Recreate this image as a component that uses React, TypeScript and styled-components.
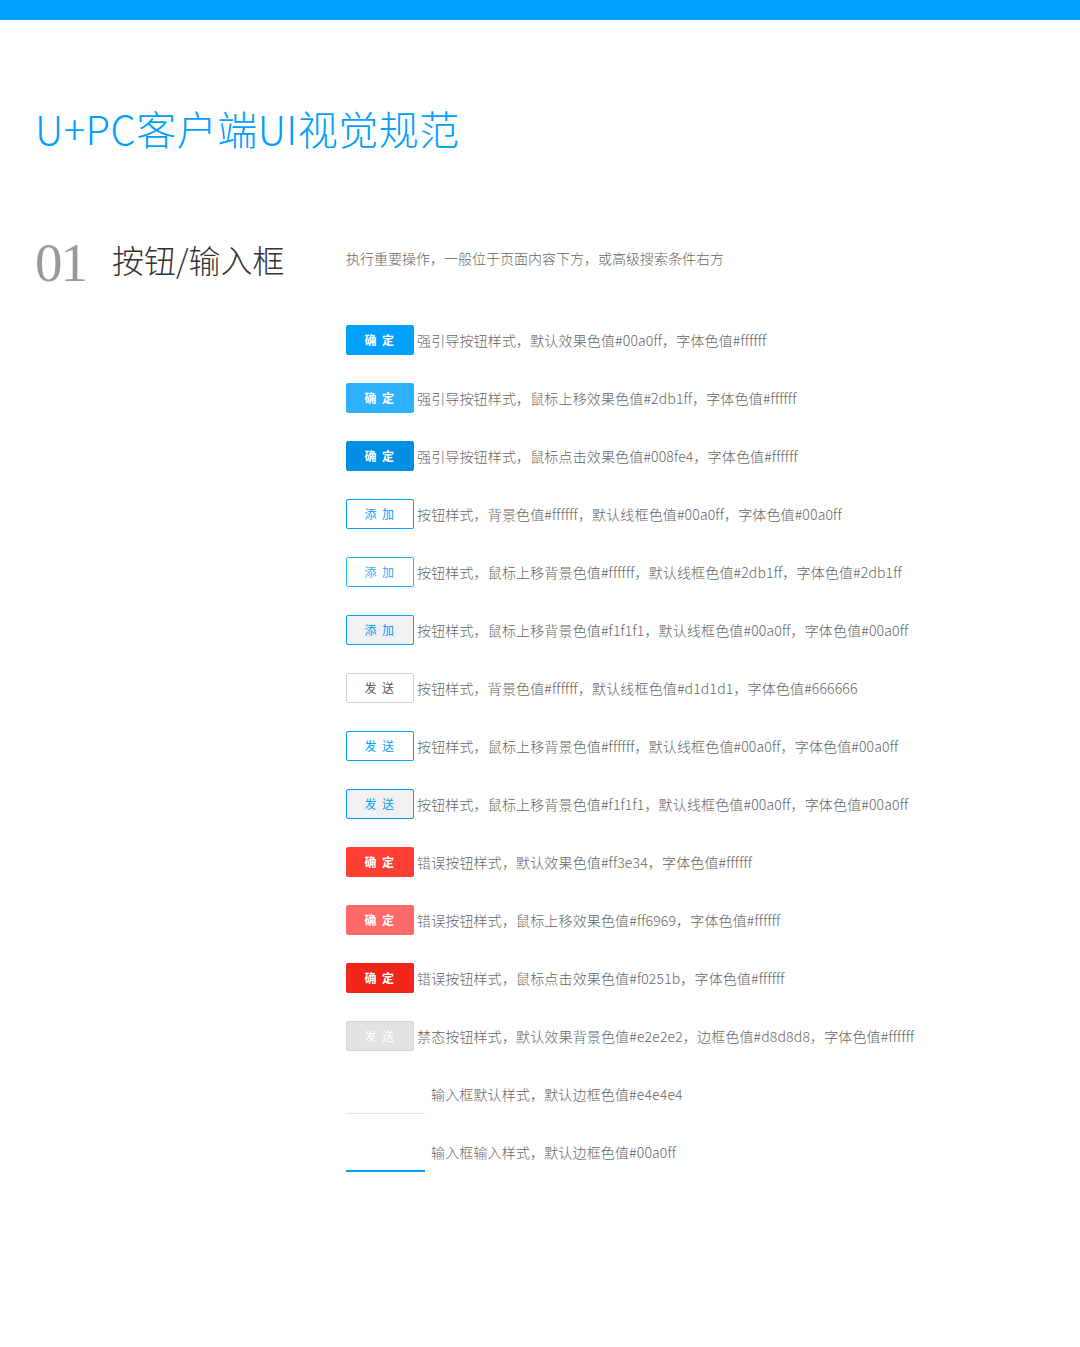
import React from "react";
import styled, { createGlobalStyle, css } from "styled-components";

const Global = createGlobalStyle`
  html, body { margin: 0; padding: 0; background: #ffffff; }
  body { font-family: "Noto Sans CJK SC", "Noto Sans", sans-serif; }
  * { box-sizing: border-box; }
`;

const Page = styled.div`
  width: 1080px;
  min-height: 1347px;
  background: #ffffff;
`;

const TopBar = styled.div`
  height: 20px;
  background: #00a0ff;
`;

const Title = styled.h1`
  margin: 88px 0 0 35px;
  font-size: 40px;
  line-height: 40px;
  font-weight: 300;
  color: #00a0ff;
  letter-spacing: 0.5px;
`;

const Section = styled.section`
  padding-left: 35px;
  margin-top: 79px;
`;

const Header = styled.div`
  display: grid;
  grid-template-columns: 311px 1fr;
  align-items: center;
  height: 56px;
`;

const HeadLeft = styled.div`
  display: flex;
  align-items: center;
`;

const Num = styled.span`
  font-family: "Liberation Serif", "DejaVu Serif", serif;
  font-size: 55px;
  line-height: 56px;
  color: #999999;
  width: 77px;
  padding-top: 8px;
  letter-spacing: -2px;
`;

const Heading = styled.h2`
  margin: 0;
  font-size: 32px;
  line-height: 40px;
  font-weight: 300;
  color: #333333;
`;

const Desc = styled.p`
  margin: 0;
  font-size: 14px;
  line-height: 20px;
  font-weight: 300;
  color: #666666;
  padding-bottom: 2px;
`;

const List = styled.div`
  margin-left: 311px;
  margin-top: 42px;
  display: flex;
  flex-direction: column;
`;

const Row = styled.div`
  display: flex;
  align-items: flex-start;
  height: 58px;
`;

type Variant = {
  bg: string;
  border: string;
  color: string;
  bold?: boolean;
};

const Btn = styled.button<{ $v: Variant }>`
  width: 68px;
  height: 30px;
  padding: 0;
  margin: 0 3px 0 0;
  border-radius: 2px;
  font-family: "Noto Sans CJK SC", "Noto Sans", sans-serif;
  font-size: 12px;
  letter-spacing: 1.5px;
  line-height: 28px;
  cursor: pointer;
  ${({ $v }) => css`
    background: ${$v.bg};
    border: 1px solid ${$v.border};
    color: ${$v.color};
    font-weight: ${$v.bold ? 700 : 400};
  `}
`;

const Input = styled.div<{ $line: string; $w: number }>`
  width: 79px;
  height: 35px;
  margin-right: 6px;
  border-bottom: ${({ $w }) => $w}px solid ${({ $line }) => $line};
`;

const Label = styled.span`
  font-size: 14px;
  line-height: 30px;
  font-weight: 300;
  color: #666666;
  white-space: nowrap;
  letter-spacing: 0.15px;
`;

type Item =
  | { kind: "btn"; text: string; v: Variant; label: string }
  | { kind: "input"; line: string; w: number; label: string };

const items: Item[] = [
  { kind: "btn", text: "确 定", v: { bg: "#00a0ff", border: "#00a0ff", color: "#ffffff", bold: true }, label: "强引导按钮样式，默认效果色值#00a0ff，字体色值#ffffff" },
  { kind: "btn", text: "确 定", v: { bg: "#2db1ff", border: "#2db1ff", color: "#ffffff", bold: true }, label: "强引导按钮样式，鼠标上移效果色值#2db1ff，字体色值#ffffff" },
  { kind: "btn", text: "确 定", v: { bg: "#008fe4", border: "#008fe4", color: "#ffffff", bold: true }, label: "强引导按钮样式，鼠标点击效果色值#008fe4，字体色值#ffffff" },
  { kind: "btn", text: "添 加", v: { bg: "#ffffff", border: "#00a0ff", color: "#00a0ff" }, label: "按钮样式，背景色值#ffffff，默认线框色值#00a0ff，字体色值#00a0ff" },
  { kind: "btn", text: "添 加", v: { bg: "#ffffff", border: "#2db1ff", color: "#2db1ff" }, label: "按钮样式，鼠标上移背景色值#ffffff，默认线框色值#2db1ff，字体色值#2db1ff" },
  { kind: "btn", text: "添 加", v: { bg: "#f1f1f1", border: "#00a0ff", color: "#00a0ff" }, label: "按钮样式，鼠标上移背景色值#f1f1f1，默认线框色值#00a0ff，字体色值#00a0ff" },
  { kind: "btn", text: "发 送", v: { bg: "#ffffff", border: "#d1d1d1", color: "#555555" }, label: "按钮样式，背景色值#ffffff，默认线框色值#d1d1d1，字体色值#666666" },
  { kind: "btn", text: "发 送", v: { bg: "#ffffff", border: "#00a0ff", color: "#00a0ff" }, label: "按钮样式，鼠标上移背景色值#ffffff，默认线框色值#00a0ff，字体色值#00a0ff" },
  { kind: "btn", text: "发 送", v: { bg: "#f1f1f1", border: "#00a0ff", color: "#00a0ff" }, label: "按钮样式，鼠标上移背景色值#f1f1f1，默认线框色值#00a0ff，字体色值#00a0ff" },
  { kind: "btn", text: "确 定", v: { bg: "#ff3e34", border: "#ff3e34", color: "#ffffff", bold: true }, label: "错误按钮样式，默认效果色值#ff3e34，字体色值#ffffff" },
  { kind: "btn", text: "确 定", v: { bg: "#ff6969", border: "#ff6969", color: "#ffffff", bold: true }, label: "错误按钮样式，鼠标上移效果色值#ff6969，字体色值#ffffff" },
  { kind: "btn", text: "确 定", v: { bg: "#f0251b", border: "#f0251b", color: "#ffffff", bold: true }, label: "错误按钮样式，鼠标点击效果色值#f0251b，字体色值#ffffff" },
  { kind: "btn", text: "发 送", v: { bg: "#e2e2e2", border: "#d8d8d8", color: "#ffffff" }, label: "禁态按钮样式，默认效果背景色值#e2e2e2，边框色值#d8d8d8，字体色值#ffffff" },
  { kind: "input", line: "#e4e4e4", w: 1, label: "输入框默认样式，默认边框色值#e4e4e4" },
  { kind: "input", line: "#00a0ff", w: 2, label: "输入框输入样式，默认边框色值#00a0ff" },
];

export default function App() {
  return (
    <Page>
      <Global />
      <TopBar />
      <Title>U+PC客户端UI视觉规范</Title>
      <Section>
        <Header>
          <HeadLeft>
            <Num>01</Num>
            <Heading>按钮/输入框</Heading>
          </HeadLeft>
          <Desc>执行重要操作，一般位于页面内容下方，或高级搜索条件右方</Desc>
        </Header>
        <List>
          {items.map((it, i) => (
            <Row key={i}>
              {it.kind === "btn" ? (
                <Btn $v={it.v}>{it.text}</Btn>
              ) : (
                <Input $line={it.line} $w={it.w} />
              )}
              <Label>{it.label}</Label>
            </Row>
          ))}
        </List>
      </Section>
    </Page>
  );
}
